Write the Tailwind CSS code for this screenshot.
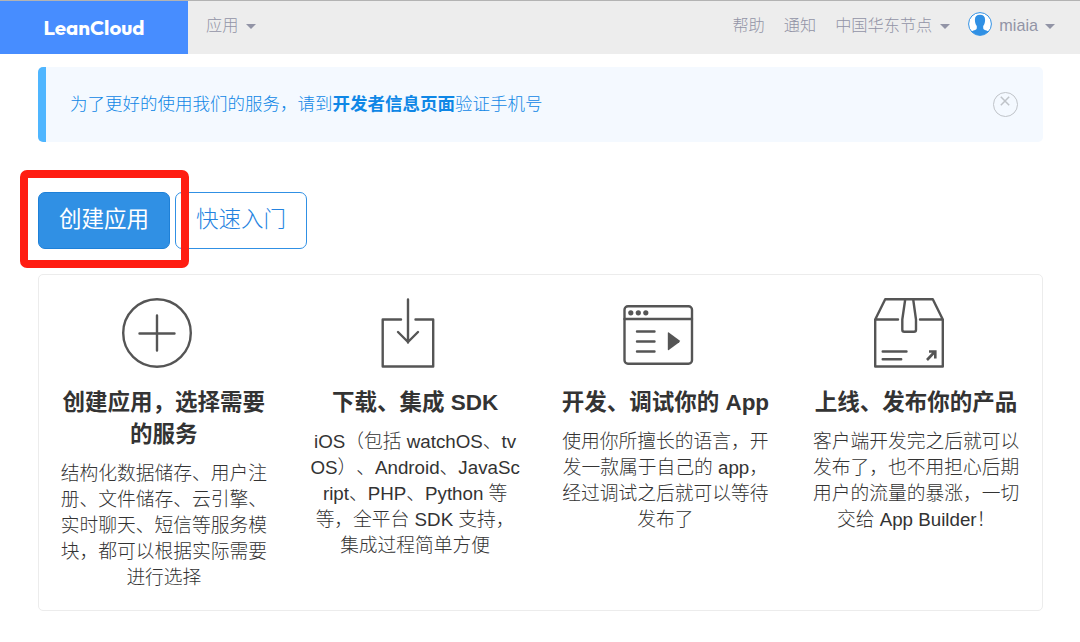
<!DOCTYPE html>
<html lang="zh-CN">
<head>
<meta charset="utf-8">
<title>LeanCloud</title>
<script src="https://cdn.jsdelivr.net/npm/@tailwindcss/browser@4"></script>
</head>
<body class="h-[642px] overflow-hidden bg-white font-['Liberation_Sans','Noto_Sans_CJK_SC',sans-serif] text-[#333] [text-spacing-trim:space-all]">
<header class="flex h-[54px] border-t border-[#b3b3b3] bg-[#ededed] text-[16.2px] leading-6 text-[#9294a6]">
  <div class="flex w-[188px] items-center justify-center bg-[#478dff] pb-px font-['Outfit','Lato',sans-serif] text-[20.5px] font-bold text-white"><span class="whitespace-nowrap">LeanCloud</span></div>
  <nav class="flex flex-1 items-start pt-[13px] pr-[25px] pl-[18px] whitespace-nowrap">
    <span class="-mt-px font-light">应用</span>
    <svg class="mt-[10px] ml-2 h-[5px] w-[10px]" viewBox="0 0 10 5" fill="#9294a6"><path d="M0 0h10L5 5z"/></svg>
    <span class="-mt-px ml-auto font-light">帮助</span>
    <span class="-mt-px ml-[19px] font-light">通知</span>
    <span class="-mt-px ml-[19px] font-light">中国华东节点</span>
    <svg class="mt-[10px] ml-2 h-[5px] w-[10px]" viewBox="0 0 10 5" fill="#9294a6"><path d="M0 0h10L5 5z"/></svg>
    <svg class="-mt-[2px] ml-[18px] size-6" viewBox="0 0 24 24"><circle cx="12" cy="12" r="11.4" fill="#fff" stroke="#3090e4"/><path fill="#3090e4" d="M12 2.8c3.4 0 5.2 1.8 5.1 5.1-.1 2.3-.5 4.4-1.9 6.1v2.200c0 1.500 2.600 1.800 5.200 3.300A11.400 11.400 0 0 1 3.600 19.500c2.600-1.500 5.200-1.800 5.200-3.300V14C7.400 12.300 7 10.200 6.900 7.900 6.800 4.600 8.600 2.800 12 2.800z"/></svg>
    <span class="-mt-px ml-[7px]">miaia</span>
    <svg class="mt-[10px] ml-[7px] h-[5px] w-[10px]" viewBox="0 0 10 5" fill="#9294a6"><path d="M0 0h10L5 5z"/></svg>
  </nav>
</header>
<main class="pt-[13px] pr-[37px] pl-[38px]">
  <section class="flex h-[75px] items-center rounded-[5px] border-l-8 border-[#4fb6ff] bg-[#f4f9ff] pr-[25px] pl-6">
    <p class="pb-[2px] text-[17.5px] leading-6 font-light whitespace-nowrap text-[#0f87e6]">为了更好的使用我们的服务，请到<a class="font-bold">开发者信息页面</a>验证手机号</p>
    <svg class="ml-auto size-[25px]" viewBox="0 0 25 25" fill="none" stroke="#bfc3c8"><circle cx="12.500" cy="12.500" r="12"/><path stroke-width="1.500" d="m7.800 4.800 8.400 8.400m0-8.400-8.400 8.400"/></svg>
  </section>
  <section class="relative mt-[50px] flex gap-[5px] text-[22.5px] leading-8">
    <button class="h-[57px] w-[132px] rounded-[7px] border border-[#1d80d8] bg-[#3090e4] pb-px whitespace-nowrap text-white">创建应用</button>
    <button class="h-[57px] w-[132px] rounded-[7px] border border-[#3090e4] bg-white pb-px font-light whitespace-nowrap text-[#2583df]">快速入门</button>
    <div class="absolute -top-[22px] -left-[18px] h-[98px] w-[169px] rounded-[7px] border-8 border-[#ff1d12]"></div>
  </section>
  <section class="mt-[25px] grid h-[337px] grid-cols-4 rounded-[5px] border border-[#ececec] pt-[22px] text-center">
    <article class="flex flex-col items-center pr-px">
      <svg class="mr-[13px] size-[72px]" viewBox="0 0 72 72" fill="none" stroke="#555" stroke-width="2.400" stroke-linecap="round"><circle cx="36" cy="36" r="33.800"/><path d="M36 18.500v35M18.500 36.500h35"/></svg>
      <h3 class="mt-[18px] text-[22.5px] leading-8 font-bold whitespace-nowrap">创建应用，选择需要<br>的服务</h3>
      <p class="mt-[10px] text-[18.75px] leading-[26px] font-light whitespace-nowrap">结构化数据储存、用户注<br>册、文件储存、云引擎、<br>实时聊天、短信等服务模<br>块，都可以根据实际需要<br>进行选择</p>
    </article>
    <article class="flex flex-col items-center">
      <svg class="mr-[14px] size-[72px]" viewBox="0 0 72 72" fill="none" stroke="#555" stroke-width="2.400" stroke-linecap="round" stroke-linejoin="round"><path d="M29 22.500H10.700v47h50.500v-47H43.500M36 2.500v43M26 35l10 10L46 35"/></svg>
      <h3 class="mt-[18px] text-[22.5px] leading-8 font-bold whitespace-nowrap">下载、集成 SDK</h3>
      <p class="mt-[10px] text-[18.75px] leading-[26px] font-light whitespace-nowrap">iOS（包括 watchOS、tv<br>OS）、Android、JavaSc<br>ript、PHP、Python 等<br>等，全平台 SDK 支持，<br>集成过程简单方便</p>
    </article>
    <article class="flex flex-col items-center pr-px">
      <svg class="mr-[14px] size-[72px]" viewBox="0 0 72 72" fill="none" stroke="#555" stroke-width="2.400" stroke-linecap="round" stroke-linejoin="round"><rect x="2.500" y="9.300" width="67.500" height="57.500" rx="3.500"/><path d="M2.500 22h67.500M15 34.500h17.500M15 44.500h17.500M15 54.500h17.500"/><g fill="#555" stroke="none"><circle cx="8.800" cy="15.800" r="2.600"/><circle cx="16.300" cy="15.800" r="2.600"/><circle cx="23.800" cy="15.800" r="2.600"/><path d="M45.800 36v16.500q0 1.200 1 .6l10.500-7.800q1.300-1 0-2L46.800 35.400q-1-.6-1 .6z"/></g></svg>
      <h3 class="mt-[18px] text-[22.5px] leading-8 font-bold whitespace-nowrap">开发、调试你的 App</h3>
      <p class="mt-[10px] text-[18.75px] leading-[26px] font-light whitespace-nowrap">使用你所擅长的语言，开<br>发一款属于自己的 app，<br>经过调试之后就可以等待<br>发布了</p>
    </article>
    <article class="flex flex-col items-center pr-px">
      <svg class="mr-[14px] size-[72px]" viewBox="0 0 72 72" fill="none" stroke="#555" stroke-width="2.400" stroke-linecap="round" stroke-linejoin="round"><path d="M2.200 22.500v47h67.600v-47L59.800 2.300H12.200zM2.200 22.500H25M47 22.500h22.800M32.200 2.500l-2.900 20v10.300q0 2 2 2h9.700q2 0 2-2V22.500l-2.800-20M9.700 54.500h23.800M9.700 62.300h18.500"/><path stroke-width="2.600" stroke-linecap="butt" stroke-linejoin="miter" d="m54 63 8-8.500M56 54.500h6.300v7"/></svg>
      <h3 class="mt-[18px] text-[22.5px] leading-8 font-bold whitespace-nowrap">上线、发布你的产品</h3>
      <p class="mt-[10px] text-[18.75px] leading-[26px] font-light whitespace-nowrap">客户端开发完之后就可以<br>发布了，也不用担心后期<br>用户的流量的暴涨，一切<br>交给 App Builder！</p>
    </article>
  </section>
</main>
</body>
</html>
